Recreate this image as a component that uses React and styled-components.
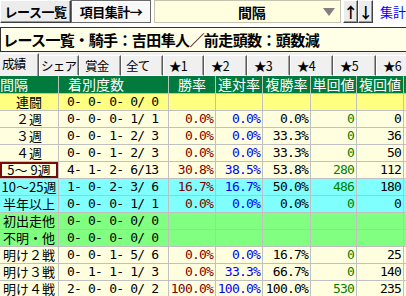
import React from 'react';
import styled, { createGlobalStyle } from 'styled-components';

const JP = `"Noto Sans CJK JP", "Noto Sans", sans-serif`;
const MONO = `"DejaVu Sans Mono", "Liberation Mono", "Noto Sans CJK JP", monospace`;

const GlobalStyle = createGlobalStyle`
  html, body { margin: 0; padding: 0; background: #ffffff; }
  body { font-family: ${JP}; }
`;

const Page = styled.div`
  width: 406px;
  height: 296px;
  overflow: hidden;
  display: flex;
  flex-direction: column;
  background: #ffffff;
`;

const TopBar = styled.div`
  display: flex;
  align-items: stretch;
  height: 23px;
  flex: none;
`;

const RaisedButton = styled.button`
  box-sizing: border-box;
  width: ${p => p.$w}px;
  height: 23px;
  margin: 0 0 0 ${p => p.$ml || 0}px;
  padding: 0;
  flex: none;
  font-family: ${JP};
  font-weight: bold;
  font-size: ${p => p.$fs || 13}px;
  letter-spacing: -0.5px;
  color: #000;
  background: ${p => (p.$flat ? '#f8f8f8' : '#ececec')};
  border: 1px solid;
  border-color: ${p => (p.$flat ? '#6a6a6a' : '#ffffff #404040 #404040 #ffffff')};
  box-shadow: ${p => (p.$flat ? 'inset 1px 1px #ffffff' : 'inset -1px -1px #9a9a9a')};
  display: flex;
  align-items: center;
  justify-content: center;
  line-height: 1;
  white-space: nowrap;
`;

const Combo = styled.div`
  box-sizing: border-box;
  width: 187px;
  height: 23px;
  margin-left: 3px;
  flex: none;
  display: flex;
  align-items: center;
  background: #ffffe0;
  border: 1px solid #c4c4b0;
`;

const ComboText = styled.span`
  flex: 1;
  padding-left: 83px;
  font-weight: bold;
  font-size: 14px;
  letter-spacing: -0.3px;
  color: #000;
`;

const ComboArrow = styled.svg`
  width: 12px;
  height: 8px;
  margin-right: 5px;
  flex: none;
`;

const LinkText = styled.span`
  margin-left: 7px;
  color: #0000ff;
  font-size: 13px;
  line-height: 23px;
  white-space: nowrap;
`;

const TitleBox = styled.div`
  box-sizing: border-box;
  margin-top: 4px;
  height: 25px;
  width: 420px;
  flex: none;
  border: 1px solid #333333;
  background: #ffffe8;
  font-weight: bold;
  font-size: 15px;
  letter-spacing: -0.6px;
  line-height: 23px;
  padding-left: 2px;
  white-space: nowrap;
  color: #000;
`;

const TabStrip = styled.div`
  display: flex;
  align-items: flex-end;
  height: 24px;
  flex: none;
  background: #f0f0f0;
`;

const Tab = styled.div`
  box-sizing: border-box;
  width: ${p => p.$w}px;
  height: ${p => (p.$active ? 23 : 21)}px;
  flex: none;
  background: #f0f0f0;
  border-top: 1px solid #ffffff;
  border-left: 1px solid ${p => (p.$first ? '#f0f0f0' : '#ffffff')};
  border-right: 1px solid #5a5a5a;
  border-bottom: ${p => (p.$active ? 'none' : '1px solid #ffffff')};
  box-shadow: inset -1px 0 #a0a0a0;
  font-size: 12.5px;
  letter-spacing: -0.8px;
  color: #000;
  padding-left: ${p => p.$pl}px;
  line-height: ${p => (p.$active ? 20 : 19)}px;
  white-space: nowrap;
  overflow: hidden;
`;

const Grid = styled.div`
  display: flex;
  flex-direction: column;
  flex: none;
`;

const Row = styled.div`
  display: flex;
  height: ${p => p.$h || 17}px;
  background: ${p => p.$bg};
  flex: none;
`;

const Cell = styled.div`
  box-sizing: border-box;
  width: ${p => p.$w}px;
  flex: none;
  border-right: 1px solid ${p => p.$line || '#c0c0c0'};
  border-bottom: 1px solid #c0c0c0;
  text-align: ${p => p.$align || 'right'};
  padding: 0 ${p => p.$pr || 0}px 0 ${p => p.$pl || 0}px;
  color: ${p => p.$color || '#000'};
  font-family: ${p => (p.$mono ? MONO : JP)};
  font-size: ${p => p.$fs || 13}px;
  letter-spacing: ${p => (p.$mono ? '-0.8px' : '0px')};
  line-height: ${p => (p.$lh || 16)}px;
  white-space: pre;
  box-shadow: ${p => (p.$selected ? 'inset 0 0 0 2px #7a0a0a' : 'none')};
`;

const W = [59, 110, 47, 47, 48, 46, 47, 4];
const COLORS = ['#000', '#000', '#800000', '#0000ff', '#000', '#008000', '#000'];

const CREAM = '#ffffe0';
const YELLOW = '#ffff80';
const CYAN = '#80ffff';
const GREEN = '#80ff80';

const headers = [
  { t: '間隔', align: 'left', pl: 0 },
  { t: '着別度数', align: 'left', pl: 9 },
  { t: '勝率', align: 'center' },
  { t: '連対率', align: 'center' },
  { t: '複勝率', align: 'center' },
  { t: '単回値', align: 'center' },
  { t: '複回値', align: 'center' },
  { t: '', align: 'center' },
];

const rows = [
  { l: '連闘', bg: YELLOW, v: ['0- 0- 0- 0/ 0', '', '', '', '', ''] },
  { l: '２週', bg: CREAM, v: ['0- 0- 0- 1/ 1', '0.0%', '0.0%', '0.0%', '0', '0'] },
  { l: '３週', bg: CREAM, v: ['0- 0- 1- 2/ 3', '0.0%', '0.0%', '33.3%', '0', '36'] },
  { l: '４週', bg: CREAM, v: ['0- 0- 1- 2/ 3', '0.0%', '0.0%', '33.3%', '0', '50'] },
  { l: '5〜 9週', bg: CREAM, sel: true, v: ['4- 1- 2- 6/13', '30.8%', '38.5%', '53.8%', '280', '112'] },
  { l: '10〜25週', bg: CYAN, v: ['1- 0- 2- 3/ 6', '16.7%', '16.7%', '50.0%', '486', '180'] },
  { l: '半年以上', bg: CYAN, v: ['0- 0- 0- 1/ 1', '0.0%', '0.0%', '0.0%', '0', '0'] },
  { l: '初出走他', bg: GREEN, v: ['0- 0- 0- 0/ 0', '', '', '', '', ''] },
  { l: '不明・他', bg: GREEN, v: ['0- 0- 0- 0/ 0', '', '', '', '', ''] },
  { l: '明け２戦', bg: CREAM, v: ['0- 0- 1- 5/ 6', '0.0%', '0.0%', '16.7%', '0', '25'] },
  { l: '明け３戦', bg: CREAM, v: ['0- 1- 1- 1/ 3', '0.0%', '33.3%', '66.7%', '0', '140'] },
  { l: '明け４戦', bg: CREAM, v: ['2- 0- 0- 0/ 2', '100.0%', '100.0%', '100.0%', '530', '235'] },
];

const tabs = [
  { t: '成績', w: 39, pl: 1, active: true, first: true },
  { t: 'シェア', w: 40, pl: 1 },
  { t: '賞金', w: 42, pl: 5 },
  { t: '全て', w: 42, pl: 4 },
  { t: '★1', w: 41, pl: 5 },
  { t: '★2', w: 43, pl: 6 },
  { t: '★3', w: 43, pl: 6 },
  { t: '★4', w: 43, pl: 6 },
  { t: '★5', w: 43, pl: 6 },
  { t: '★6', w: 40, pl: 6 },
];

export default function App() {
  return (
    <Page>
      <GlobalStyle />
      <TopBar>
        <RaisedButton $w={71}>レース一覧</RaisedButton>
        <RaisedButton $w={80} $flat>項目集計→</RaisedButton>
        <Combo>
          <ComboText>間隔</ComboText>
          <ComboArrow viewBox="0 0 12 8">
            <polygon points="0,0 12,0 6,8" fill="#808080" />
          </ComboArrow>
        </Combo>
        <RaisedButton $w={15} $ml={2} $fs={15}>↑</RaisedButton>
        <RaisedButton $w={15} $fs={15}>↓</RaisedButton>
        <LinkText>集計</LinkText>
      </TopBar>
      <TitleBox>レース一覧・騎手：吉田隼人／前走頭数：頭数減</TitleBox>
      <TabStrip>
        {tabs.map(t => (
          <Tab key={t.t} $w={t.w} $pl={t.pl} $active={t.active} $first={t.first}>
            {t.t}
          </Tab>
        ))}
      </TabStrip>
      <Grid>
        <Row $bg="#007a3d" $h={18}>
          {headers.map((h, i) => (
            <Cell
              key={i}
              $w={W[i]}
              $align={h.align}
              $pl={h.pl}
              $color="#ffffff"
              $fs={14}
              $lh={17}
              $line="#b8c8b8"
            >
              {h.t}
            </Cell>
          ))}
        </Row>
        {rows.map(r => (
          <Row key={r.l} $bg={r.bg}>
            <Cell $w={W[0]} $align="center" $selected={r.sel}>
              {r.l}
            </Cell>
            <Cell $w={W[1]} $align="left" $pl={8} $mono>
              {r.v[0]}
            </Cell>
            {r.v.slice(1).map((v, j) => (
              <Cell key={j} $w={W[j + 2]} $pr={2} $mono $color={COLORS[j + 2]}>
                {v}
              </Cell>
            ))}
            <Cell $w={W[7]} />
          </Row>
        ))}
      </Grid>
    </Page>
  );
}
